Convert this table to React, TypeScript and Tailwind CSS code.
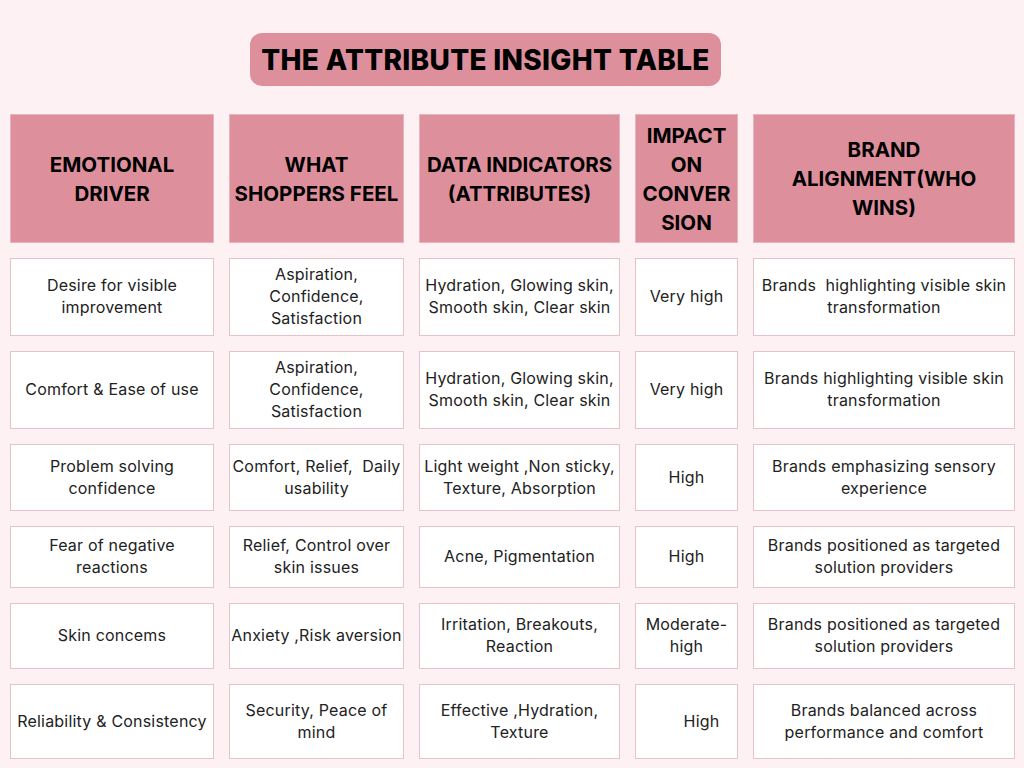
import React from 'react';

const headers: string[][] = [
  ['EMOTIONAL', 'DRIVER'],
  ['WHAT', 'SHOPPERS FEEL'],
  ['DATA INDICATORS', '(ATTRIBUTES)'],
  ['IMPACT', 'ON', 'CONVER', 'SION'],
  ['BRAND', 'ALIGNMENT(WHO', 'WINS)'],
];

// every cell is written out line by line, as the lines break in the sheet
const rows: string[][][] = [
  [
    ['Desire for visible', 'improvement'],
    ['Aspiration,', 'Confidence,', 'Satisfaction'],
    ['Hydration, Glowing skin,', 'Smooth skin, Clear skin'],
    ['Very high'],
    ['Brands\u00a0 highlighting visible skin', 'transformation'],
  ],
  [
    ['Comfort & Ease of use'],
    ['Aspiration,', 'Confidence,', 'Satisfaction'],
    ['Hydration, Glowing skin,', 'Smooth skin, Clear skin'],
    ['Very high'],
    ['Brands highlighting visible skin', 'transformation'],
  ],
  [
    ['Problem solving', 'confidence'],
    ['Comfort, Relief,\u00a0 Daily', 'usability'],
    ['Light weight ,Non sticky,', 'Texture, Absorption'],
    ['High'],
    ['Brands emphasizing sensory', 'experience'],
  ],
  [
    ['Fear of negative', 'reactions'],
    ['Relief, Control over', 'skin issues'],
    ['Acne, Pigmentation'],
    ['High'],
    ['Brands positioned as targeted', 'solution providers'],
  ],
  [
    ['Skin concems'],
    ['Anxiety ,Risk aversion'],
    ['Irritation, Breakouts,', 'Reaction'],
    ['Moderate-', 'high'],
    ['Brands positioned as targeted', 'solution providers'],
  ],
  [
    ['Reliability & Consistency'],
    ['Security, Peace of', 'mind'],
    ['Effective ,Hydration,', 'Texture'],
    ['High'],
    ['Brands balanced across', 'performance and comfort'],
  ],
];

const App: React.FC = () => {
  return (
    <div
      className="w-[1024px] h-[768px] overflow-hidden bg-[#fdf1f3] text-[#1f1f1f]"
      style={{ fontFamily: 'Inter, "Open Sans", sans-serif' }}
    >
      {/* Title */}
      <div className="pt-[33px] pl-[250px]">
        <div className="w-[471px] h-[53px] rounded-[12px] bg-[#de8f9c] flex items-center justify-center">
          <h1 className="text-[28px] font-extrabold tracking-[0.3px] text-black whitespace-nowrap">
            THE ATTRIBUTE INSIGHT TABLE
          </h1>
        </div>
      </div>

      {/* Table */}
      <div className="mt-[28px] ml-[10px] grid grid-cols-[204px_175px_201px_103px_262px] grid-rows-[129px_78px_78px_67px_62px_66px_75px] gap-x-[15px] gap-y-[15px]">
        {headers.map((h) => (
          <div
            key={h.join(' ')}
            className="bg-[#de8f9c] border border-[#e7b3bc] flex flex-col items-center justify-center text-center"
          >
            {h.map((line) => (
              <span
                key={line}
                className="block whitespace-nowrap text-[20.5px] leading-[29px] font-bold text-black"
              >
                {line}
              </span>
            ))}
          </div>
        ))}
        {rows.map((r, ri) =>
          r.map((cell, ci) => (
            <div
              key={`${ri}-${ci}`}
              className={`bg-white border border-[#e6c2c9] flex flex-col items-center justify-center text-center pb-[2px] ${
                ri === 5 && ci === 3 ? 'pl-[30px]' : ''
              }`}
            >
              {cell.map((line) => (
                <span
                  key={line}
                  className="block whitespace-nowrap text-[16px] leading-[22px] text-[#222] tracking-[0.2px]"
                >
                  {line}
                </span>
              ))}
            </div>
          ))
        )}
      </div>
    </div>
  );
};

export default App;
